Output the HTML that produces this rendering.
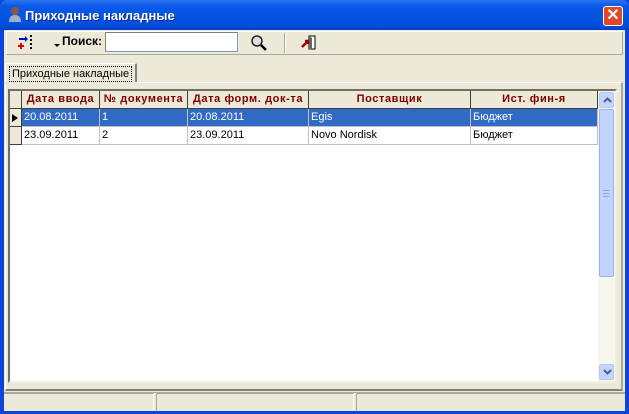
<!DOCTYPE html>
<html><head><meta charset="utf-8"><style>
*{margin:0;padding:0;box-sizing:border-box}
body{width:629px;height:414px;overflow:hidden;background:#0A47D8;font-family:"Liberation Sans",sans-serif;font-size:11px;position:relative}
.abs{position:absolute}
#title{left:0;top:0;width:629px;height:30px;background:linear-gradient(#2C74F0,#0A58E8 20%,#0450DE 80%,#0340C8);border-radius:7px 7px 0 0}
#title span{position:absolute;left:25px;top:8px;color:#fff;font-weight:bold;font-size:13px;text-shadow:1px 1px #0A2A8A}
#close{left:603px;top:6px;width:20px;height:20px;background:#E0482A;border:1px solid #fff;border-radius:3px;color:#fff;font-size:16px;font-weight:bold;text-align:center;line-height:18px}
#client{left:4px;top:30px;width:621px;height:381px;background:#ECE9D8}
.hd{position:absolute;top:0;height:18px;background:#ECE9D8;border-right:1px solid #404040;border-bottom:1px solid #404040;color:#800000;font-weight:bold;text-align:center;line-height:17px;font-size:11px;letter-spacing:0.6px;white-space:nowrap;overflow:hidden}
.cell{position:absolute;height:18px;border-right:1px solid #C0C0C0;border-bottom:1px solid #C0C0C0;padding-left:2px;line-height:17px;font-size:11px}
.sb{position:absolute;left:1px;width:15px;height:16px;background:#C4D4FC;border:1px solid #B4C8F6;border-radius:2px}
</style></head><body>
<div id="title" class="abs">
 <svg class="abs" style="left:7px;top:6px" width="16" height="17"><circle cx="8" cy="5" r="4" fill="#8B5A3C"/><path d="M2 16 Q2 9 8 9 Q14 9 14 16Z" fill="#9DB0C8"/></svg>
 <span>Приходные накладные</span>
</div>
<div id="close" class="abs">✕</div>
<div id="client" class="abs">
 <div class="abs" style="left:2px;top:1px;width:617px;height:24px;border:1px solid #fff;border-right-color:#ACA899;border-bottom-color:#ACA899"></div>
 <svg class="abs" style="left:14px;top:5px" width="20" height="16"><path d="M1 4H9" stroke="#0000E0" stroke-width="2"/><path d="M7 1L10 4L7 7" fill="#0000E0"/><path d="M3 8V14M0 11H6" stroke="#E00000" stroke-width="2"/><path d="M12 1h2M12 5h2M12 9h2M12 13h2" stroke="#000" stroke-width="2"/></svg>
 <div class="abs" style="left:50px;top:14px;width:0;height:0;border-left:3px solid transparent;border-right:3px solid transparent;border-top:3px solid #000"></div>
 <div class="abs" style="left:58px;top:4px;font-weight:bold;font-size:12px">Поиск:</div>
 <div class="abs" style="left:101px;top:2px;width:133px;height:20px;background:#fff;border:1px solid #7F9DB9;border-top-color:#808080;border-left-color:#808080"></div>
 <svg class="abs" style="left:246px;top:4px" width="18" height="18"><circle cx="7" cy="7" r="5" fill="#ddd" stroke="#222" stroke-width="1.5"/><path d="M11 11L16 16" stroke="#000" stroke-width="2.5"/></svg>
 <div class="abs" style="left:280px;top:3px;width:2px;height:20px;border-left:1px solid #ACA899;border-right:1px solid #fff"></div>
 <svg class="abs" style="left:297px;top:5px" width="16" height="16"><path d="M8 1H14V14H8Z" fill="#fff" stroke="#000"/><path d="M8 1L11 3V15L8 14Z" fill="#666"/><path d="M1 12L7 6M4 6H7V9" stroke="#900" stroke-width="2.5" fill="none"/></svg>
 <div class="abs" style="left:1px;top:33px;width:132px;height:20px;background:#ECE9D8;border:1px solid #fff;border-right:2px solid #808080;border-bottom:none;border-radius:2px 2px 0 0"></div>
 <div class="abs" style="left:5px;top:36px;width:123px;height:16px;border:1px dotted #000;font-size:11px;line-height:14px;padding-left:2px">Приходные накладные</div>
 <div class="abs" style="left:1px;top:52px;width:618px;height:309px;border-top:1px solid #fff;border-left:1px solid #fff;border-right:2px solid #ACA899;border-bottom:2px solid #808080"></div>
 <div class="abs" style="left:1px;top:52px;width:132px;height:2px;background:#ECE9D8"></div>
 <div class="abs" style="left:4px;top:59px;width:609px;height:294px;background:#fff;border:2px solid #808080;border-right-color:#F1EFE2;border-bottom-color:#F1EFE2;border-top-color:#716F64;border-left-color:#716F64">
  <div class="abs" style="left:0;top:0;width:590px;height:290px">
   <div class="hd" style="left:0;width:12px"></div>
   <div class="hd" style="left:12px;width:78px">Дата ввода</div>
   <div class="hd" style="left:90px;width:88px">№ документа</div>
   <div class="hd" style="left:178px;width:121px">Дата форм. док-та</div>
   <div class="hd" style="left:299px;width:162px">Поставщик</div>
   <div class="hd" style="left:461px;width:127px">Ист. фин-я</div>
   <div class="hd" style="left:0;top:18px;width:12px"></div>
   <div class="abs" style="left:2px;top:23px;width:0;height:0;border-top:4px solid transparent;border-bottom:4px solid transparent;border-left:6px solid #000"></div>
   <div class="hd" style="left:0;top:36px;width:12px"></div>
   <div class="abs" style="left:12px;top:18px;width:576px;height:18px;background:#316AC5"></div>
   <div class="cell" style="left:12px;top:18px;width:78px;color:#fff">20.08.2011</div>
   <div class="cell" style="left:90px;top:18px;width:88px;color:#fff">1</div>
   <div class="cell" style="left:178px;top:18px;width:121px;color:#fff">20.08.2011</div>
   <div class="cell" style="left:299px;top:18px;width:162px;color:#fff">Egis</div>
   <div class="cell" style="left:461px;top:18px;width:127px;color:#fff">Бюджет</div>
   <div class="cell" style="left:12px;top:36px;width:78px">23.09.2011</div>
   <div class="cell" style="left:90px;top:36px;width:88px">2</div>
   <div class="cell" style="left:178px;top:36px;width:121px">23.09.2011</div>
   <div class="cell" style="left:299px;top:36px;width:162px">Novo Nordisk</div>
   <div class="cell" style="left:461px;top:36px;width:127px">Бюджет</div>
  </div>
  <div class="abs" style="left:588px;top:0;width:17px;height:290px;background:#F6F5EE">
   <div class="sb" style="top:1px"><svg class="abs" style="left:3px;top:4px" width="9" height="6"><path d="M1 5L4.5 1.5L8 5" stroke="#4D6185" stroke-width="2" fill="none"/></svg></div>
   <div class="abs" style="left:1px;top:18px;width:15px;height:168px;background:#C1D3FB;border:1px solid #9EB4EC;border-radius:2px"></div>
   <div class="abs" style="left:5px;top:99px;width:6px;height:7px;border-top:1px solid #8CA8E4;border-bottom:1px solid #8CA8E4;background:linear-gradient(transparent 2px,#8CA8E4 2px,#8CA8E4 3px,transparent 3px)"></div>
   <div class="sb" style="top:273px"><svg class="abs" style="left:3px;top:4px" width="9" height="6"><path d="M1 1L4.5 4.5L8 1" stroke="#4D6185" stroke-width="2" fill="none"/></svg></div>
  </div>
 </div>
 <div class="abs" style="left:0;top:362px;width:621px;height:1px;background:#ACA899"></div>
 <div class="abs" style="left:0;top:363px;width:150px;height:18px;border-top:1px solid #ACA899;border-right:1px solid #fff"></div>
 <div class="abs" style="left:152px;top:363px;width:198px;height:18px;border:1px solid #ACA899;border-bottom:none;border-right:1px solid #fff"></div>
 <div class="abs" style="left:352px;top:363px;width:269px;height:18px;border-left:1px solid #ACA899;border-top:1px solid #ACA899"></div>
</div>
</body></html>
